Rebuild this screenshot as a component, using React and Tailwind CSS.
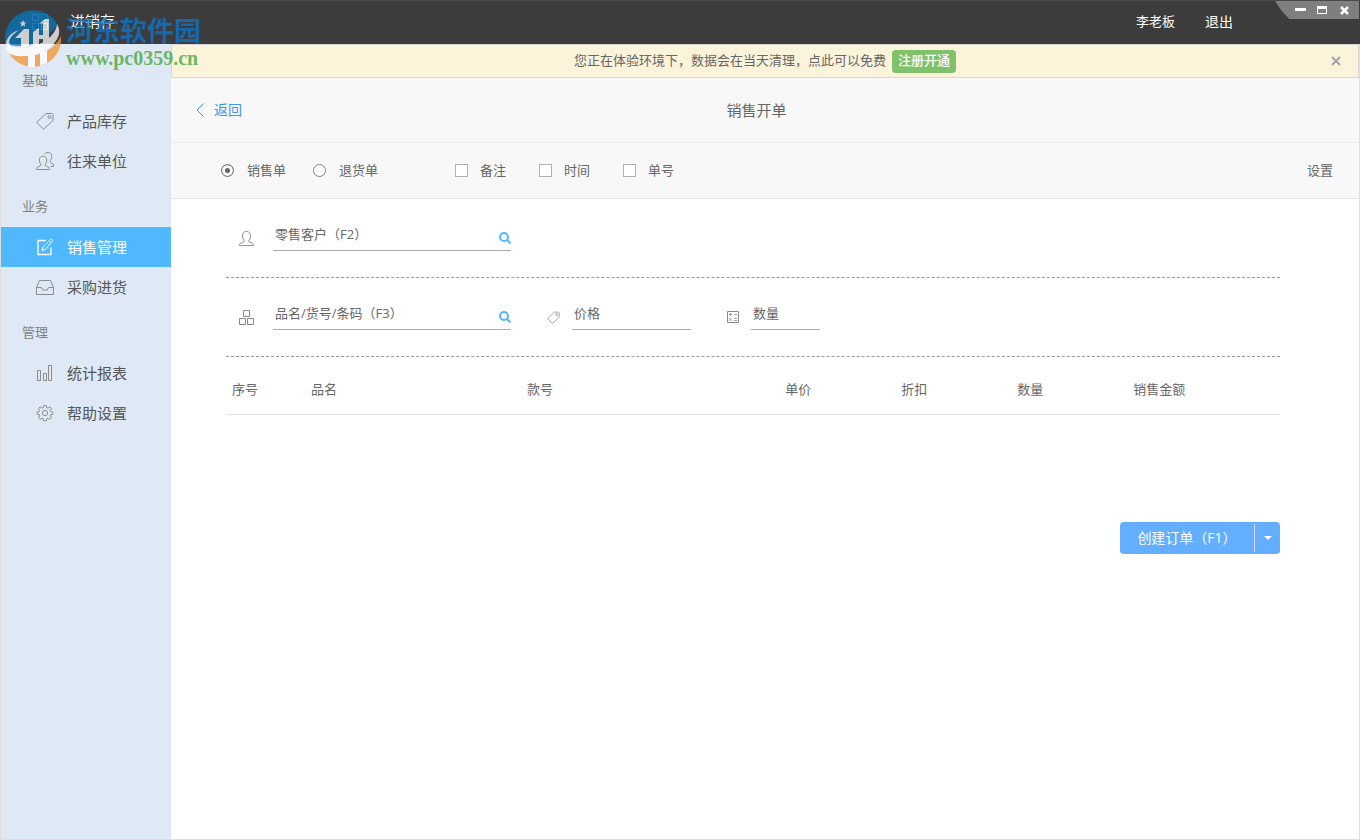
import React from 'react'
import clsx from 'clsx'

const Svg = ({ size = 18, className = '', children }) => (
  <svg
    width={size}
    height={size}
    viewBox="0 0 18 18"
    fill="none"
    stroke="currentColor"
    strokeWidth="1"
    aria-hidden="true"
    className={clsx('shrink-0', className)}
  >
    {children}
  </svg>
)

const TagIcon = (props) => (
  <Svg {...props}>
    <path d="M10 1.500h6l1 1v6L8.300 16.600a1 1 0 0 1-1.400 0L1.400 11.100a1 1 0 0 1 0-1.400z" />
    <circle cx="13.500" cy="5" r="1.500" />
  </Svg>
)

const UsersIcon = (props) => (
  <Svg {...props}>
    <path d="M.5 17.500h13v-1.300c0-1.200-4.400-1.800-4.400-3.200 0-.9 1.700-2 1.700-5 0-2.300-1.300-3.800-3.600-3.800S3.300 5.700 3.300 8c0 3 1.700 4.100 1.700 5 0 1.400-4.500 2-4.500 3.200z" />
    <path d="M8.600 2.300C9.300 1.200 10.400.5 12 .5c2.400 0 3.700 1.600 3.700 4 0 3-1.700 4-1.700 5 0 1.400 3.500 2 3.500 3.200v1.800h-3" />
  </Svg>
)

const UserIcon = (props) => (
  <Svg {...props}>
    <path d="M1.500 16.500h15v-1.300c0-1.400-5.200-1.900-5.200-3.500 0-1 2-2.300 2-5.400 0-2.800-1.700-4.800-4.300-4.800S4.700 3.500 4.700 6.300c0 3.100 2 4.400 2 5.400 0 1.600-5.200 2.100-5.200 3.500z" />
  </Svg>
)

const EditIcon = (props) => (
  <Svg {...props}>
    <path d="M10 2.500H2v14h13V9.500" strokeWidth="1.300" />
    <path d="M6 12.500l1-3.500 7.500-7.500c1.200-.6 2.600.8 2 2L9 11.500z M13.500 3l1.800 1.800" />
  </Svg>
)

const InboxIcon = (props) => (
  <Svg {...props}>
    <path d="M.5 9.500l3-7h11l3 7v7H.5z M.5 9.500H5c.6 0 .8.3 1 1l.6 1.500h4.800l.6-1.500c.2-.7.4-1 1-1h4.500" />
  </Svg>
)

const ChartIcon = (props) => (
  <Svg {...props}>
    <path d="M1.500 6.500h3v10h-3z M7.500 9.500h3v7h-3z M12.500 1.500h3v15h-3z" />
  </Svg>
)

const GearIcon = (props) => (
  <Svg {...props}>
    <circle cx="9" cy="9" r="2.600" />
    <path d="M7.700 1.500h2.600l.4 2.100 1.300.6 1.800-1.300 1.700 1.700-1.300 1.800.6 1.300 2.100.4v2.200l-2.100.4-.6 1.300 1.300 1.800-1.700 1.700-1.800-1.300-1.300.6-.4 2.100H7.700l-.4-2.100-1.300-.6-1.800 1.300-1.700-1.700L3.800 12l-.6-1.300-2.100-.4V8.100l2.100-.4.600-1.300-1.300-1.800 1.700-1.700L6 4.200l1.300-.6z" />
  </Svg>
)

const BoxesIcon = () => (
  <svg width="17" height="17" viewBox="0 0 17 17" fill="none" stroke="currentColor" aria-hidden="true" className="shrink-0">
    <path d="M5.500 1.500h6v6h-6z M1.500 9.500h6v6h-6z M9.500 9.500h6v6h-6z" />
  </svg>
)

const CalcIcon = () => (
  <svg width="14" height="14" viewBox="0 0 14 14" fill="none" stroke="currentColor" aria-hidden="true" className="shrink-0">
    <path d="M1.500 1.500h11v11h-11z" />
    <path d="M3 4.500h3M4.500 3v3M8 4.500h3M3.300 8.300l2.400 2.400M5.700 8.300l-2.400 2.400M8 8.500h3M8 10.500h3" strokeWidth=".8" />
  </svg>
)

const SearchIcon = () => (
  <svg width="12" height="12" viewBox="0 0 12 12" fill="none" stroke="currentColor" strokeWidth="2" aria-hidden="true">
    <circle cx="5" cy="5" r="4" />
    <path d="M8 8l3.500 3.500" />
  </svg>
)

const menu = [
  {
    title: '基础',
    items: [
      { label: '产品库存', icon: TagIcon },
      { label: '往来单位', icon: UsersIcon },
    ],
  },
  {
    title: '业务',
    items: [
      { label: '销售管理', icon: EditIcon, active: true },
      { label: '采购进货', icon: InboxIcon },
    ],
  },
  {
    title: '管理',
    items: [
      { label: '统计报表', icon: ChartIcon },
      { label: '帮助设置', icon: GearIcon },
    ],
  },
]

const columns = [
  { label: '序号', width: 'w-[7.5%]' },
  { label: '品名', width: 'w-[20.5%]' },
  { label: '款号', width: 'w-[24.5%]' },
  { label: '单价', width: 'w-[11%]' },
  { label: '折扣', width: 'w-[11%]' },
  { label: '数量', width: 'w-[11%]' },
  { label: '销售金额', width: 'w-[14.5%]' },
]

const AppIcon = () => (
  <svg width="16" height="16" viewBox="0 0 16 16" fill="none" aria-hidden="true">
    <path d="M.5.5h6v6h-6z" stroke="#7f93a3" />
    <path d="M9.500.5h6v6h-6z" stroke="#16a5b4" />
    <path d="M.5 9.500h6v6h-6z" stroke="#2ea3e6" />
    <path d="M9.500 9.500h6v6h-6z" stroke="#e8b86a" />
  </svg>
)

const WindowControls = () => (
  <div className="absolute right-px top-0 flex h-[18px] w-[84px] items-center justify-end gap-[10px] bg-[#7f7f7f] pr-[9px] text-white [clip-path:polygon(0_0,100%_0,100%_100%,17%_100%,8%_55%)]">
    <button type="button" aria-label="最小化" className="flex w-3 justify-center">
      <svg width="11" height="10" viewBox="0 0 11 10"><path d="M0 3h11v3H0z" fill="currentColor" /></svg>
    </button>
    <button type="button" aria-label="最大化" className="flex w-3 justify-center">
      <svg width="10" height="8" viewBox="0 0 10 8"><path d="M0 0h10v8H0z M1 3v4h8V3z" fill="currentColor" fillRule="evenodd" /></svg>
    </button>
    <button type="button" aria-label="关闭" className="flex w-3 justify-center">
      <svg width="9" height="9" viewBox="0 0 9 9"><path d="M1 1l7 7M8 1L1 8" stroke="currentColor" strokeWidth="2.500" /></svg>
    </button>
  </div>
)

const Watermark = () => (
  <div className="pointer-events-none absolute left-1 top-2 flex gap-1 opacity-75">
    <svg width="58" height="62" viewBox="-1 -3 58 62" aria-hidden="true">
      <path d="M.5 33A28 28 0 0 1 52 13C44 28 24 40 .5 33z" fill="#0877bd" />
      <path d="M4 42A28 28 0 0 0 56 25C48 42 26 50 4 42z" fill="#f4932e" />
      <path d="M10 27l9-9h5v17l-8 3V27z" fill="#fff" />
      <path d="M28 21l6-4v7h4V12l-4 1 6-5h4v24l-6 4v-8h-4v9l-6 2z" fill="#fff" />
      <path d="M23 44h7v12h-7z M35 40h7v12l-7 3z" fill="#fff" />
      <path d="M14 19C5 25 2 31 6 35c9 7 44-2 46-22 9 15-11 31-32 32C6 46-1 41 1 32c1-6 6-11 13-13z" fill="#fff" />
      <path d="M18 9l1 2.500h2.500l-2 1.600.8 2.600-2.300-1.500-2.300 1.500.8-2.600-2-1.600H17z" fill="#fff" />
    </svg>
    <div className="pt-1.5">
      <p className="font-['Noto_Sans_CJK_SC',sans-serif] text-[27px] font-bold leading-8 text-[#0877cf]">河东软件园</p>
      <p className="font-['Liberation_Serif',serif] text-xl font-bold leading-6 text-[#3fa535]">www.pc0359.cn</p>
    </div>
  </div>
)

const Header = () => (
  <header className="relative flex h-11 items-center justify-between border-t border-[#4a4a4a] bg-[#3c3c3c] pb-0.5 pl-8 text-white">
    <div className="flex items-center gap-[22px]">
      <AppIcon />
      <h1 className="text-[15px]">进销存</h1>
    </div>
    <div className="flex items-center gap-[30px] pr-[127px]">
      <button type="button" className="text-[13px]">李老板</button>
      <button type="button" className="text-sm">退出</button>
    </div>
    <WindowControls />
  </header>
)

const Sidebar = () => (
  <nav className="w-[170px] shrink-0 bg-[#dfe9f5] pt-[11px]">
    {menu.map(({ title, items }) => (
      <section key={title}>
        <h2 className="flex h-[46px] items-center pl-[21px] pt-1.5 text-[13px] text-[#808080]">{title}</h2>
        {items.map(({ label, icon: Icon, active }) => (
          <a
            key={label}
            href="#"
            className={clsx(
              'flex h-10 items-center gap-[13px] pl-[35px] text-[15px]',
              active ? 'bg-[#50b8ff] text-white' : 'text-[#555]'
            )}
          >
            <Icon className={active ? 'text-white' : 'text-[#8c8c8c]'} />
            {label}
          </a>
        ))}
      </section>
    ))}
  </nav>
)

const Notice = () => (
  <div className="flex h-[34px] items-center border border-[#d8d8d8] bg-[#fcf3db] pr-4 text-[13px] text-[#666]">
    <p className="flex flex-1 items-center justify-center gap-1.5 pl-7">
      您正在体验环境下，数据会在当天清理，点此可以免费
      <button type="button" className="h-[23px] rounded bg-[#7fc26b] px-1.5 font-medium text-white">注册开通</button>
    </p>
    <button type="button" aria-label="关闭提示" className="text-[#a3a3a3]">
      <svg width="12" height="10" viewBox="0 0 12 10"><path d="M2 1l8 8M10 1L2 9" stroke="currentColor" strokeWidth="2" /></svg>
    </button>
  </div>
)

const Radio = ({ label, ...props }) => (
  <label className="flex items-center gap-[13px]">
    <input
      type="radio"
      name="orderType"
      className="size-[13px] appearance-none rounded-full border border-[#808080] bg-white checked:bg-[#666] checked:shadow-[inset_0_0_0_3px_#f8f8f8]"
      {...props}
    />
    {label}
  </label>
)

const Checkbox = ({ label }) => (
  <label className="flex items-center gap-3">
    <input type="checkbox" className="size-[13px] appearance-none border border-[#b0b0b0] bg-white checked:bg-[#50b8ff]" />
    {label}
  </label>
)

const Field = ({ label, search = false, className = '' }) => (
  <div className={clsx('mb-1.5 flex h-8 items-center border-b border-[#adadad]', className)}>
    <input
      type="text"
      aria-label={label}
      placeholder={label}
      className="w-full min-w-0 flex-1 pl-0.5 text-[13px] text-[#666] outline-none placeholder:text-[#666]"
    />
    {search && (
      <button type="button" aria-label={`搜索${label}`} className="pt-1.5 text-[#50b8ff]">
        <SearchIcon />
      </button>
    )}
  </div>
)

export default function App() {
  return (
    <div className="relative flex min-h-screen flex-col bg-white font-['Open_Sans','Noto_Sans_CJK_SC',sans-serif]">
      <Header />
      <div className="flex flex-1 border-x border-b border-[#dedede]">
        <Sidebar />
        <main className="min-w-0 flex-1">
          <Notice />
          <div className="flex h-[65px] items-center border-b border-[#ebebeb] bg-[#f8f8f8] pl-[25px] pr-6">
            <a href="#" className="flex items-center gap-2.5 text-sm text-[#3d95ef]">
              <svg width="8" height="14" viewBox="0 0 8 14" fill="none" stroke="currentColor" aria-hidden="true">
                <path d="M7.500.5L1 7l6.500 6.500" />
              </svg>
              返回
            </a>
            <h2 className="flex-1 pr-16 text-center text-[15px] text-[#666]">销售开单</h2>
          </div>

          {/* Order options */}
          <div className="flex h-14 items-center border-b border-[#e4e4e4] bg-[#f8f8f8] pl-[50px] pr-[26px] text-[13px] text-[#666]">
            <div className="flex gap-[27px]">
              <Radio label="销售单" defaultChecked />
              <Radio label="退货单" />
            </div>
            <div className="flex gap-[33px] pl-[77px]">
              <Checkbox label="备注" />
              <Checkbox label="时间" />
              <Checkbox label="单号" />
            </div>
            <button type="button" className="ml-auto">设置</button>
          </div>

          <div className="pl-[55px] pr-[79px]">
            <div className="flex h-[79px] items-center border-b border-dashed border-[#999] pl-3 text-[#888]">
              <UserIcon size={17} />
              <Field label="零售客户（F2）" search className="ml-[18px] w-[238px]" />
            </div>
            <div className="flex h-[79px] items-center border-b border-dashed border-[#999] pl-3 text-[#888]">
              <BoxesIcon />
              <Field label="品名/货号/条码（F3）" search className="ml-[18px] w-[238px]" />
              <TagIcon size={13} className="ml-9" />
              <Field label="价格" className="ml-3 w-[119px]" />
              <div className="ml-[35px]">
                <CalcIcon />
              </div>
              <Field label="数量" className="ml-[11px] w-[69px]" />
            </div>

            <table className="w-full table-fixed text-[13px] text-[#666]">
              <thead>
                <tr className="h-[57px] border-b border-[#e4e4e4]">
                  {columns.map(({ label, width }) => (
                    <th key={label} className={clsx('pl-1.5 pt-2 text-left font-normal', width)}>
                      {label}
                    </th>
                  ))}
                </tr>
              </thead>
            </table>

            <div className="flex justify-end pt-[107px]">
              <div className="flex h-8 items-center rounded bg-[#63aeff] text-white">
                <button type="button" className="w-[134px] text-sm">创建订单（F1）</button>
                <button
                  type="button"
                  aria-label="更多操作"
                  className="flex h-7 w-[26px] items-center justify-center border-l border-[#d0dceb]"
                >
                  <svg width="8" height="4" viewBox="0 0 8 4"><path d="M0 0h8L4 4z" fill="currentColor" /></svg>
                </button>
              </div>
            </div>
          </div>
        </main>
      </div>
      <Watermark />
    </div>
  )
}
